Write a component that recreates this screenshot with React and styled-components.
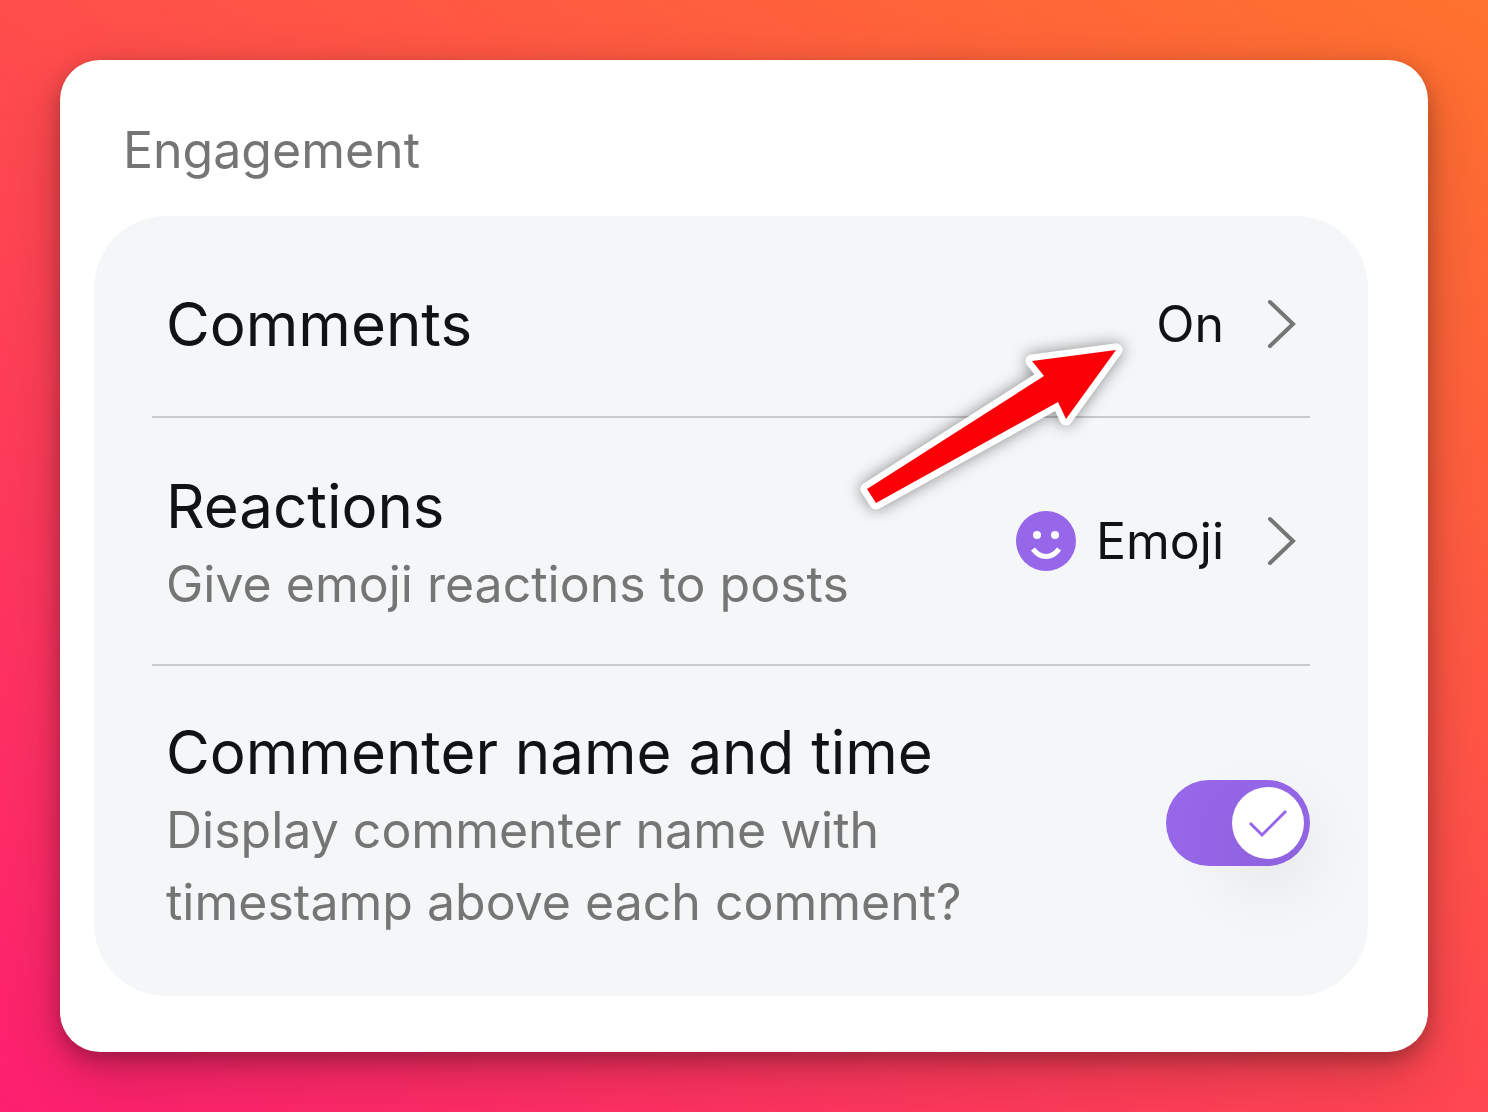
import React from "react";
import styled, { createGlobalStyle } from "styled-components";

const GlobalStyle = createGlobalStyle`
  * {
    box-sizing: border-box;
  }

  body {
    margin: 0;
    font-family: Inter, sans-serif;
    color: #111213;
  }
`;

const Page = styled.div`
  min-height: 100vh;
  padding: 60px;
  display: flex;
  background: linear-gradient(32deg, #fd1f70, #ff4a4e 50%, #ff722e);
`;

const Card = styled.main`
  flex: 1;
  padding: 60px 60px 56px 34px;
  border-radius: 40px;
  background: #fff;
  box-shadow:
    0 20px 60px rgba(0, 0, 0, 0.2),
    0 8px 20px rgba(0, 0, 0, 0.25);
`;

const Heading = styled.h1`
  margin: 0 0 36px;
  padding-left: 29px;
  font-size: 50px;
  line-height: 60px;
  font-weight: 400;
  color: #757575;
`;

const Panel = styled.section`
  padding: 16px 58px;
  border-radius: 72px;
  background: #f4f6f8;
`;

const Row = styled.div`
  display: flex;
  align-items: center;
  justify-content: space-between;
  padding: ${(props) => props.$space}px 0 ${(props) => props.$space}px 14px;

  & + & {
    border-top: 2px solid #c8c9cb;
  }
`;

const RowText = styled.div`
  padding-top: 8px;
`;

const Label = styled.h2`
  margin: 0;
  font-size: 60px;
  line-height: 72px;
  font-weight: 400;
`;

const Hint = styled.p`
  margin: 6px 0 0;
  max-width: 860px;
  font-size: 50px;
  line-height: 72px;
  color: #757575;
`;

const ValueButton = styled.button`
  display: flex;
  align-items: center;
  gap: 20px;
  padding: 0 14px 0 0;
  border: 0;
  background: none;
  font: inherit;
  font-size: 50px;
  line-height: 72px;
  color: inherit;
  cursor: pointer;
`;

const Chevron = styled.svg`
  width: 30px;
  height: 52px;
  margin-left: 22px;
  fill: none;
  stroke: #757575;
  stroke-width: 4;
  stroke-linecap: round;
`;

const Switch = styled.label`
  display: flex;
  justify-content: flex-end;
  width: 144px;
  height: 86px;
  padding: 7px 6px;
  border-radius: 43px;
  background: #9667e9;
  cursor: pointer;
`;

const SwitchInput = styled.input`
  position: absolute;
  opacity: 0;
`;

const Knob = styled.span`
  display: flex;
  align-items: center;
  justify-content: center;
  width: 72px;
  height: 72px;
  border-radius: 50%;
  background: #fff;
  box-shadow: 0 24px 72px rgba(0, 0, 0, 0.1);
`;

const Arrow = styled.svg`
  position: absolute;
  left: 850px;
  top: 330px;
  width: 290px;
  height: 190px;
  overflow: visible;
  pointer-events: none;
  filter: drop-shadow(0 0 8px rgba(0, 0, 0, 0.45));
`;

const ChevronRight = () => (
  <Chevron viewBox="0 0 30 52" aria-hidden="true">
    <path d="M4 4 L27 26 L4 48" />
  </Chevron>
);

const Smiley = () => (
  <svg width="60" height="60" viewBox="0 0 60 60" aria-hidden="true">
    <circle cx="30" cy="30" r="30" fill="#9667e9" />
    <circle cx="21" cy="24" r="4" fill="#fff" />
    <circle cx="39" cy="24" r="4" fill="#fff" />
    <path d="M17 38 C24 48 36 48 43 38" fill="none" stroke="#fff" strokeWidth="5" />
  </svg>
);

export default function App() {
  return (
    <>
      <GlobalStyle />
      <Page>
        <Card>
          <Heading>Engagement</Heading>
          <Panel>
            <Row $space={56}>
              <Label>Comments</Label>
              <ValueButton type="button">
                On
                <ChevronRight />
              </ValueButton>
            </Row>
            <Row $space={44}>
              <RowText>
                <Label>Reactions</Label>
                <Hint>Give emoji reactions to posts</Hint>
              </RowText>
              <ValueButton type="button">
                <Smiley />
                Emoji
                <ChevronRight />
              </ValueButton>
            </Row>
            <Row $space={42}>
              <RowText>
                <Label id="commenter-label">Commenter name and time</Label>
                <Hint>Display commenter name with timestamp above each comment?</Hint>
              </RowText>
              <Switch>
                <SwitchInput type="checkbox" role="switch" aria-labelledby="commenter-label" defaultChecked />
                <Knob>
                  <svg width="40" height="32" viewBox="0 0 40 32" fill="none" stroke="#9667e9" strokeWidth="3" aria-hidden="true">
                    <path d="M2 16 L14 28 L38 4" />
                  </svg>
                </Knob>
              </Switch>
            </Row>
          </Panel>
        </Card>
      </Page>
      <Arrow viewBox="850 330 290 190" aria-hidden="true">
        <path
          d="M1116 350 L1032 361 L1044 376 L867 489 L876 503 L1058 402 L1066 419 Z"
          fill="#fb0007"
          stroke="#fff"
          strokeWidth="13"
          strokeLinejoin="round"
          paintOrder="stroke"
        />
      </Arrow>
    </>
  );
}
